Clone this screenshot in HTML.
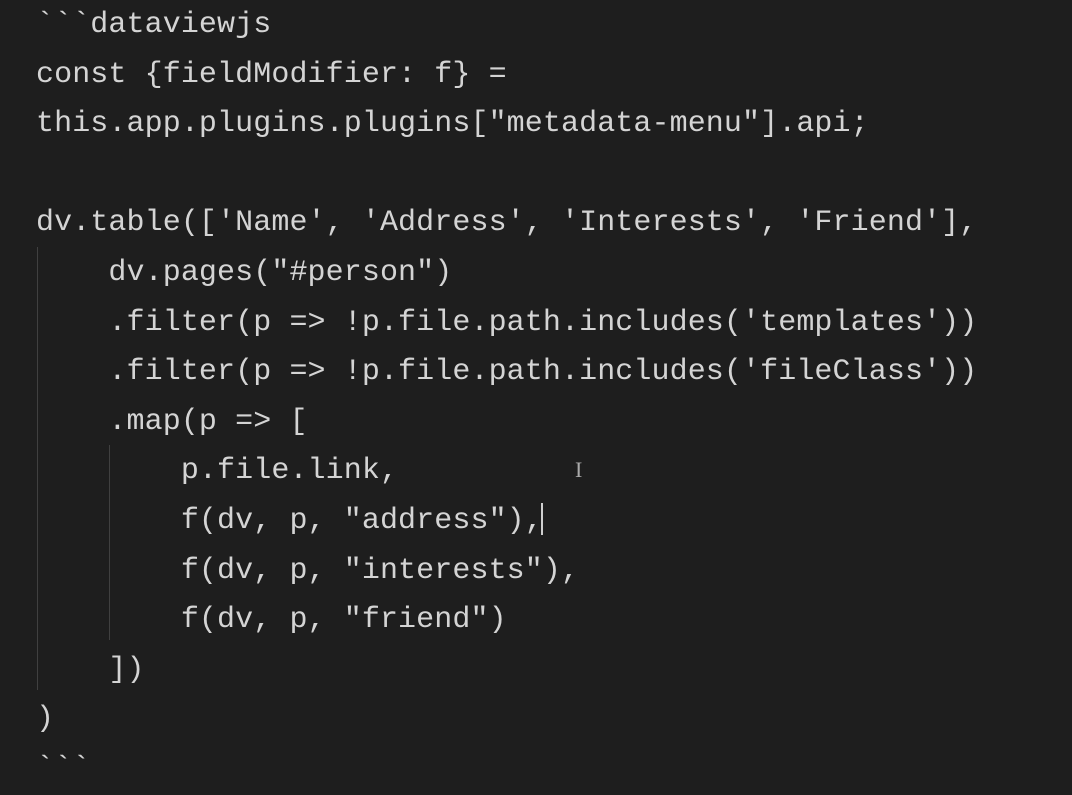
<!DOCTYPE html>
<html><head><meta charset="utf-8"><style>
html,body{margin:0;padding:0;background:#1e1e1e;width:1072px;height:769px;overflow:hidden}
pre{position:absolute;left:36px;top:1px;margin:0;font-family:"Liberation Mono",monospace;font-size:30px;line-height:49.6px;color:#d4d4d4;letter-spacing:0.1px}
.g{position:absolute;width:1px;background:#404040}
</style></head><body>
<div class="g" style="left:37px;top:247px;height:443px"></div>
<div class="g" style="left:109px;top:445px;height:195px"></div>
<pre>&#96;&#96;&#96;dataviewjs
const {fieldModifier: f} =
this.app.plugins.plugins["metadata-menu"].api;

dv.table(['Name', 'Address', 'Interests', 'Friend'],
    dv.pages("#person")
    .filter(p =&gt; !p.file.path.includes('templates'))
    .filter(p =&gt; !p.file.path.includes('fileClass'))
    .map(p =&gt; [
        p.file.link,
        f(dv, p, "address"),
        f(dv, p, "interests"),
        f(dv, p, "friend")
    ])
)
&#96;&#96;&#96;</pre>
<div style="position:absolute;left:541px;top:503px;width:2px;height:32px;background:#cfcfcf"></div>
<div style="position:absolute;left:575px;top:457px;font-family:'Liberation Serif',serif;font-size:22px;color:#aaa">I</div>
</body></html>
